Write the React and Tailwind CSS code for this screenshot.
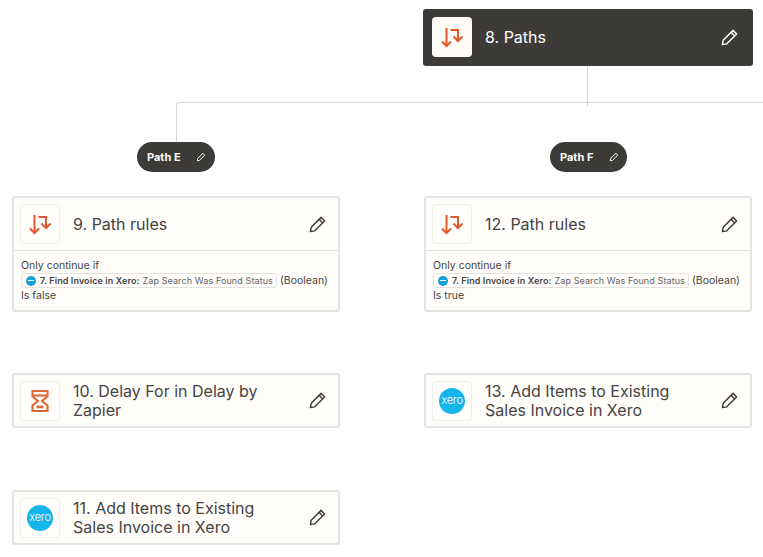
import React from 'react';

function PathsIcon({ className }) {
    return (
        <svg viewBox="0 0 24 24" className={className} fill="none" stroke="#e0582a" strokeWidth="2">
            <path d="M6.500 3v18" />
            <path d="M2 16.500l4.500 4.500 4.500-4.500" />
            <path d="M10.500 5H18v11" />
            <path d="M13.500 11.500l4.500 4.500 4.500-4.500" />
        </svg>
    );
}

function DelayIcon() {
    return (
        <svg viewBox="0 0 24 24" className="w-6 h-6" fill="none" stroke="#de6b3d" strokeWidth="2.2">
            <path d="M4.500 2h15v5.500L14 12l5.500 4.500V22h-15v-5.500L10 12 4.500 7.500z" />
            <path d="M8.500 18h7" strokeWidth="2.600" />
            <path d="M4.500 6.500h15" />
        </svg>
    );
}

function XeroIcon() {
    return (
        <span className="w-[26px] h-[26px] rounded-full bg-[#13b5ea] flex items-center justify-center shrink-0 overflow-hidden">
            <span className="text-white text-[11px] leading-none font-light tracking-[-0.2px] pb-[1px]">xero</span>
        </span>
    );
}

function Pencil({ dark }) {
    return (
        <svg viewBox="0 0 24 24" className="w-[19px] h-[19px]" fill="none" stroke={dark ? '#ffffff' : '#3d3b38'} strokeWidth="1.800" strokeLinejoin="round">
            <path d="M3 21l1-5.500L16.500 3l4.500 4.500L8.500 20z" />
            <path d="M14 5.500l4.500 4.500" />
        </svg>
    );
}

function SmallPencil() {
    return (
        <svg viewBox="0 0 24 24" className="w-[10px] h-[10px]" fill="none" stroke="#ffffff" strokeWidth="2.400" strokeLinejoin="round">
            <path d="M3 21l1-5.500L16.500 3l4.500 4.500L8.500 20z" />
        </svg>
    );
}

function StepHeader({ icon, title, dark, height }) {
    return (
        <div className={`flex items-center ${height} ${dark ? 'pl-[9px] pr-[14px]' : 'pl-[6px] pr-[11px]'}`}>
            <div className={`w-10 h-10 rounded flex items-center justify-center shrink-0 ${dark ? 'bg-[#fffcf7]' : 'bg-[#fffefc] border border-[#f0eee9]'}`}>
                {icon}
            </div>
            <div className="ml-[13px] flex-1">
                <div className={`max-w-[205px] pt-[1px] text-base leading-[19.5px] ${dark ? 'text-white' : 'text-[#454442]'}`}>
                    {title}
                </div>
            </div>
            <Pencil dark={dark} />
        </div>
    );
}

function RuleBody({ state }) {
    return (
        <div className="border-t border-[#e2e0db] px-[7px] pt-[7px] text-[10.5px] leading-[15px] text-[#454442]">
            <div>Only continue if</div>
            <div className="flex items-center whitespace-nowrap">
                <span className="flex items-center h-[15px] border border-[#e4e2dd] rounded-[3px] bg-[#fffefc] pl-[4px] pr-[3px] text-[9px] tracking-[0.1px]">
                    <span className="w-[10px] h-[10px] rounded-full bg-[#13a0d8] flex items-center justify-center mr-[4px]">
                        <span className="w-[6px] h-[1.500px] bg-white"></span>
                    </span>
                    <b className="font-semibold">7. Find Invoice in Xero:</b>
                    <span className="ml-[3px] text-[#66635e]">Zap Search Was Found Status</span>
                </span>
                <span className="ml-[3px]">(Boolean)</span>
            </div>
            <div>{state}</div>
        </div>
    );
}

function Step({ pos, children }) {
    return (
        <div className={`absolute w-[328px] bg-[#fffdfa] border-2 border-[#e3e3e1] rounded-[3px] ${pos}`}>
            {children}
        </div>
    );
}

function PathLabel({ pos, name }) {
    return (
        <div className={`absolute h-[30px] rounded-full bg-[#3d3b38] text-white flex items-center pl-[10px] text-[11px] font-bold ${pos}`}>
            <span className="w-[49px] whitespace-nowrap">{name}</span>
            <SmallPencil />
        </div>
    );
}

export default function App() {
    const pathsIcon = <PathsIcon className="w-6 h-6" />;

    return (
        <div className="relative w-[763px] h-[557px] overflow-hidden bg-white font-[Inter,sans-serif]">
            {/* connector lines */}
            <div className="absolute left-[587px] top-[66px] w-px h-[40px] bg-[#d6d5d2]"></div>
            <div className="absolute left-[176px] top-[102px] w-[587px] h-[40px] border-l border-t border-[#d6d5d2] rounded-tl-[3px]"></div>

            <div className="absolute left-[423px] top-[9px] w-[330px] h-[57px] bg-[#3d3b38] rounded-[3px]">
                <StepHeader dark height="h-[56px]" icon={pathsIcon} title="8. Paths" />
            </div>

            <PathLabel pos="left-[137px] top-[142px] w-[78px]" name="Path E" />
            <PathLabel pos="left-[550px] top-[142px] w-[77px]" name="Path F" />

            <Step pos="left-[12px] top-[196px] h-[116px]">
                <StepHeader height="h-[52px]" icon={pathsIcon} title="9. Path rules" />
                <RuleBody state="Is false" />
            </Step>
            <Step pos="left-[424px] top-[196px] h-[116px]">
                <StepHeader height="h-[52px]" icon={pathsIcon} title="12. Path rules" />
                <RuleBody state="Is true" />
            </Step>

            <Step pos="left-[12px] top-[373px] h-[55px]">
                <StepHeader height="h-[51px]" icon={<DelayIcon />} title="10. Delay For in Delay by Zapier" />
            </Step>
            <Step pos="left-[424px] top-[373px] h-[55px]">
                <StepHeader height="h-[51px]" icon={<XeroIcon />} title="13. Add Items to Existing Sales Invoice in Xero" />
            </Step>
            <Step pos="left-[12px] top-[490px] h-[55px]">
                <StepHeader height="h-[51px]" icon={<XeroIcon />} title="11. Add Items to Existing Sales Invoice in Xero" />
            </Step>
        </div>
    );
}
